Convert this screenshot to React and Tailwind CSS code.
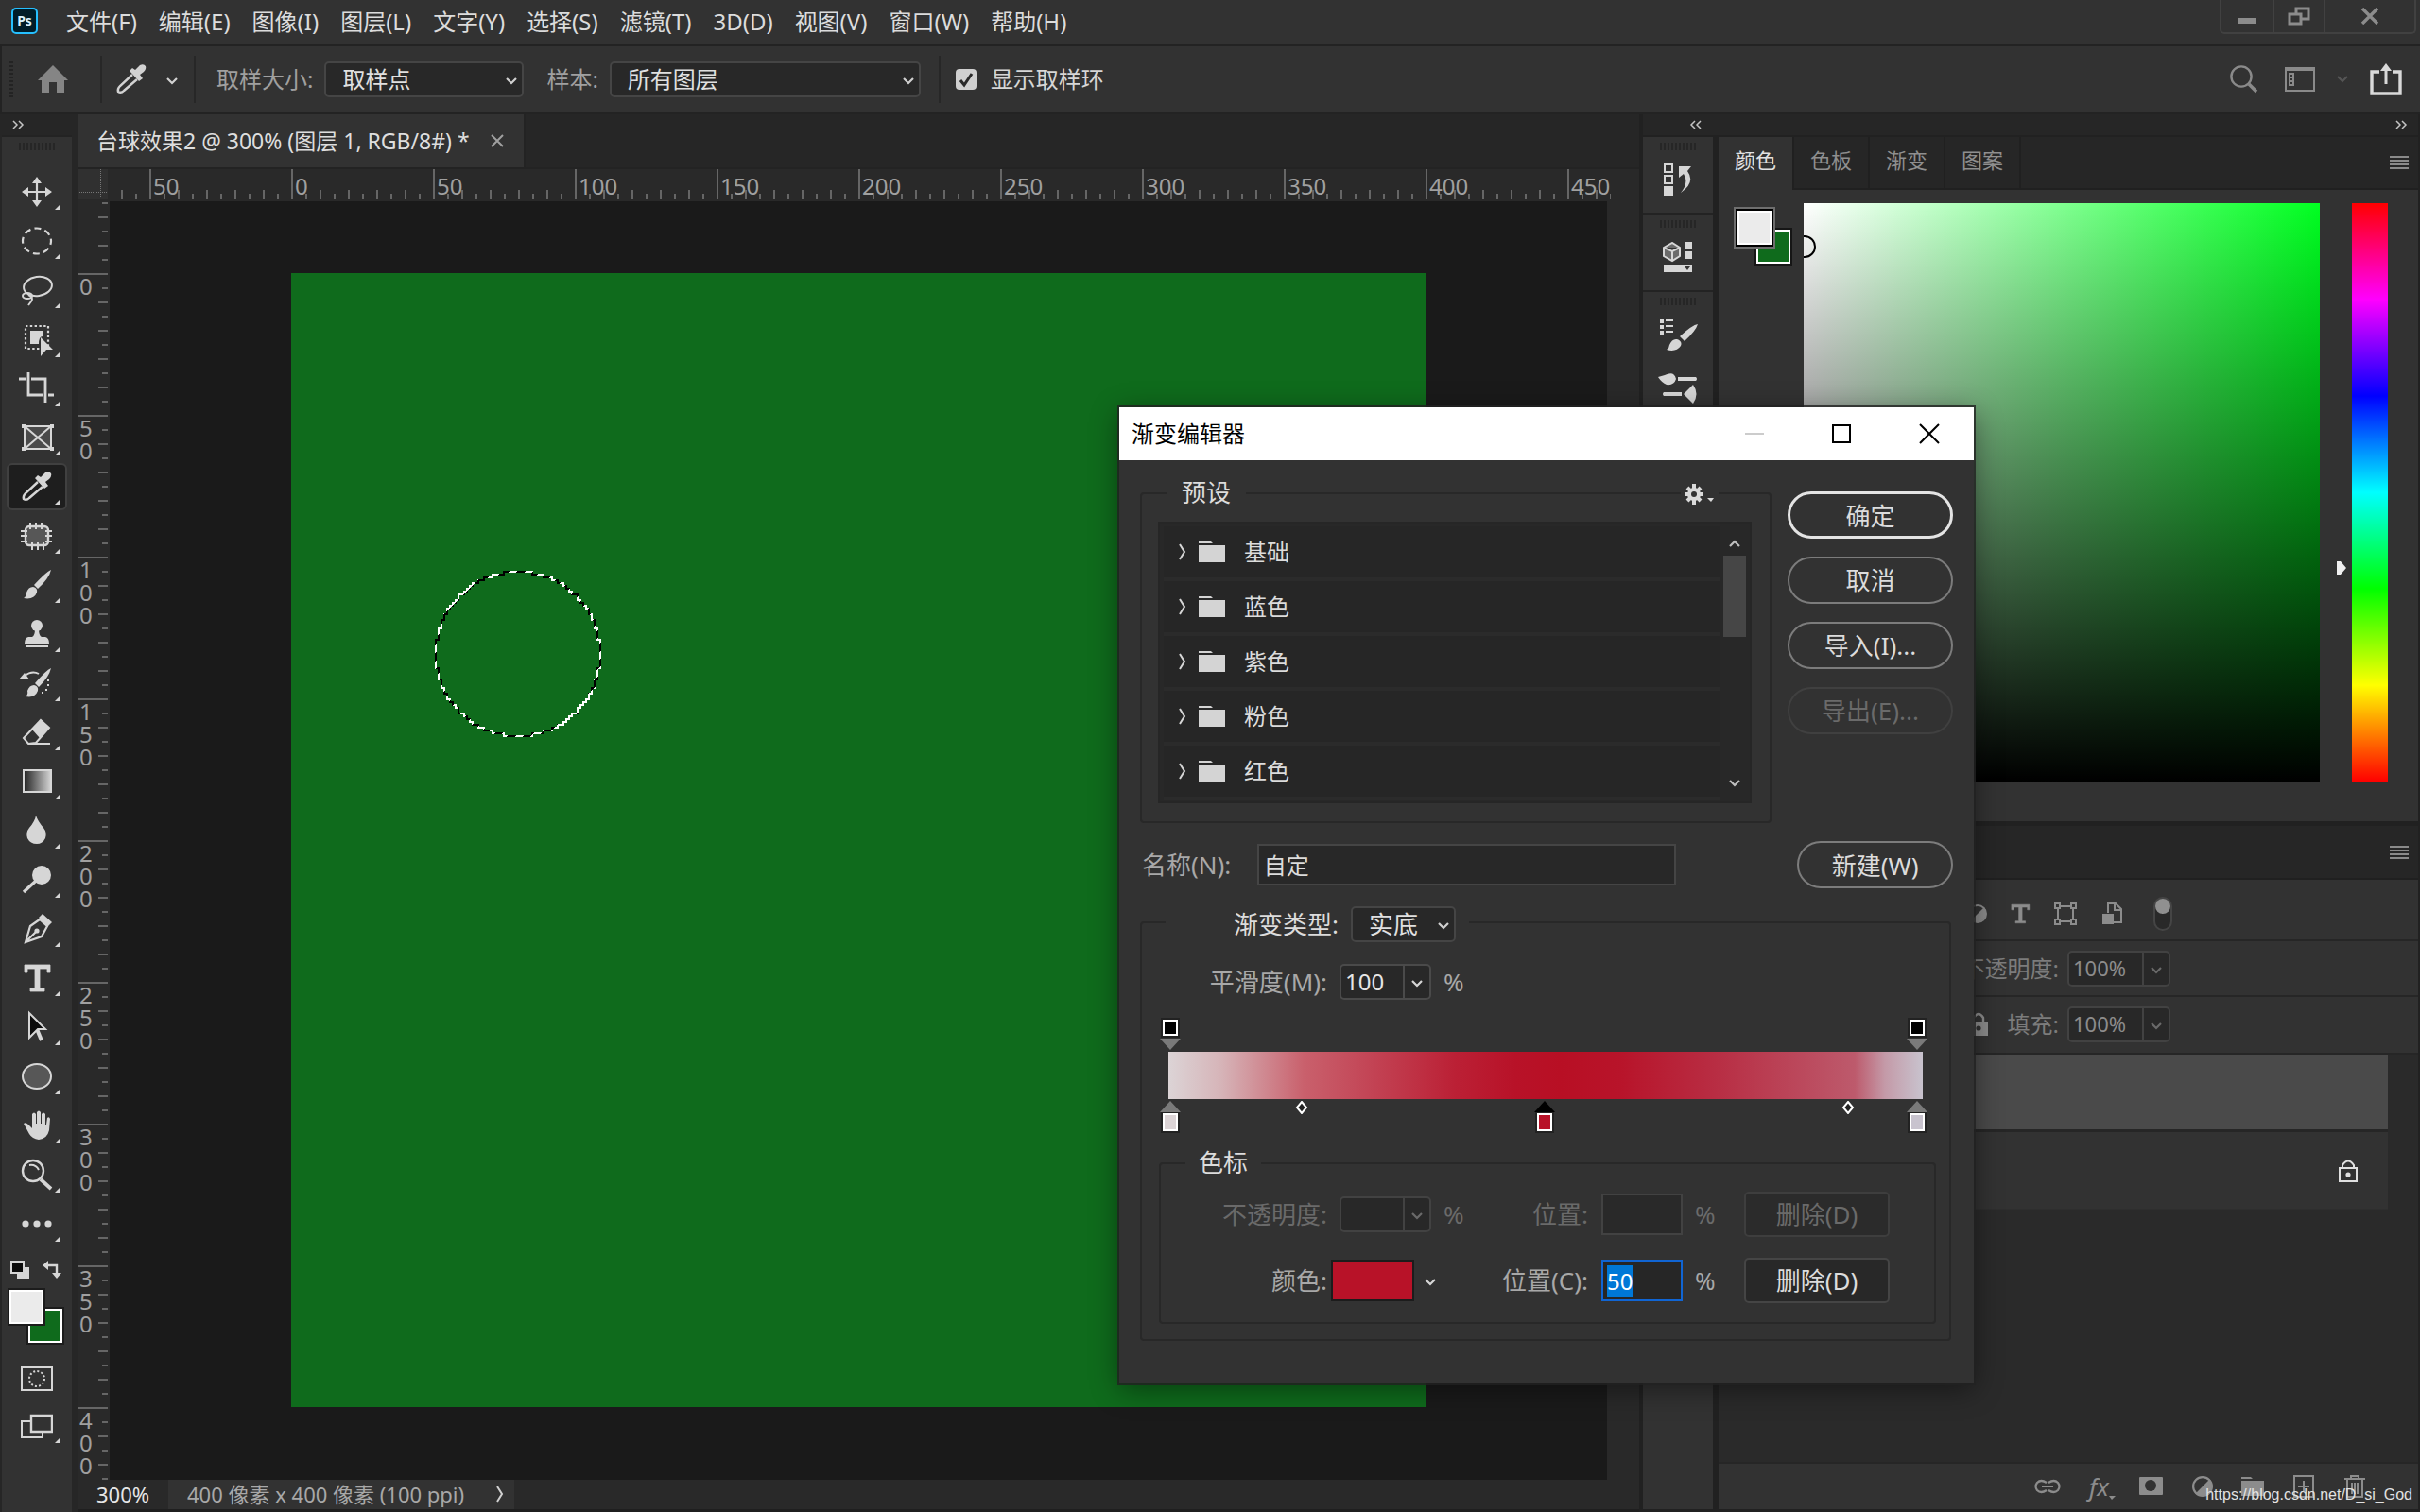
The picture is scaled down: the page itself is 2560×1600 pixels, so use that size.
// src/App.jsx
import React, { useEffect, useRef } from 'react';

const MENUS = ['文件(F)', '编辑(E)', '图像(I)', '图层(L)', '文字(Y)', '选择(S)', '滤镜(T)', '3D(D)', '视图(V)', '窗口(W)', '帮助(H)'];
const PRESETS = ['基础', '蓝色', '紫色', '粉色', '红色'];
const PANEL_TABS = ['颜色', '色板', '渐变', '图案'];
// the first cell of each ruler starts outside the view
const H_LABELS = ['', 50, 0, 50, 100, 150, 200, 250, 300, 350, 400, 450];
const V_LABELS = ['', 0, 50, 100, 150, 200, 250, 300, 350, 400];
const TICKS = [1, 2, 3, 4, 5, 6, 7, 8, 9];

const eyedropper = (
  <>
    <path d="M21 15 L8 27 Q5 30 6 33 Q9 35 12 32 L26 20" fill="none" stroke="currentColor" strokeWidth="2.4" />
    <path d="M18 11 L21 8 L24 10 L29 5 Q33 3 35 6 Q36 9 33 12 L29 15 L32 19 L28 22 Z" fill="currentColor" />
  </>
);

const brush = (
  <>
    <path d="M35 4 Q30 6 17 20 L21 24 Q33 13 35 4 Z" fill="currentColor" />
    <path d="M6 34 Q9 32 9 28 Q11 22 16 22 Q21 23 20 28 Q17 36 6 34 Z" fill="currentColor" />
  </>
);

const typeIcon = (
  <path d="M7 6 H34 V14 H31 V10 H23 V31 H28 V34 H13 V31 H18 V10 H10 V14 H7 Z" fill="currentColor" stroke="currentColor" strokeWidth="0.8" />
);

const TOOLS = [
  {
    name: '移动工具',
    icon: (
      <>
        <path d="M20 9 V31 M9 20 H31" stroke="currentColor" strokeWidth="2.2" />
        <path d="M20 4 L25 11 H15 Z M20 36 L25 29 H15 Z M4 20 L11 15 V25 Z M36 20 L29 15 V25 Z" fill="currentColor" />
      </>
    ),
  },
  {
    name: '椭圆选框工具',
    icon: <ellipse cx="20" cy="20" rx="15" ry="13.5" fill="none" stroke="currentColor" strokeWidth="2.2" strokeDasharray="7 4.2" strokeDashoffset="3" />,
  },
  {
    name: '套索工具',
    icon: (
      <g fill="none" stroke="currentColor" strokeWidth="2">
        <ellipse cx="21" cy="16" rx="15" ry="10" transform="rotate(-8 21 16)" />
        <ellipse cx="10" cy="26" rx="5" ry="3" />
        <path d="M11 25 Q17 28 14 32 L11 36" />
      </g>
    ),
  },
  {
    name: '对象选择工具',
    icon: (
      <>
        <rect x="8" y="6" width="24" height="24" fill="none" stroke="currentColor" strokeWidth="2.2" strokeDasharray="2.4 2.4" />
        <path d="M13 11 H27 V17 Q22 16 22 25 H13 Z" fill="currentColor" />
        <path d="M24 18 L37 31 H30 L24 38 Z" fill="currentColor" />
      </>
    ),
  },
  {
    name: '裁剪工具',
    icon: <path d="M1 10 H8 M11 3 V27 H26 M14 10 H29 V35 M32 27 H38" fill="none" stroke="currentColor" strokeWidth="2.8" />,
  },
  {
    name: '图框工具',
    icon: (
      <>
        <path d="M7 8 H35 V32 H7 Z M7 8 L35 32 M35 8 L7 32" fill="#4a4a4a" stroke="currentColor" strokeWidth="2" />
        <path d="M4 6 H8 V10 H4 Z M34 6 H38 V10 H34 Z M4 30 H8 V34 H4 Z M34 30 H38 V34 H34 Z" fill="currentColor" />
      </>
    ),
  },
  { name: '吸管工具', icon: eyedropper, active: true },
  {
    name: '修补工具',
    icon: (
      <>
        <rect x="8" y="10" width="24" height="20" rx="4" fill="#575757" stroke="currentColor" strokeWidth="2.4" />
        <path d="M13 6 V13 M19 6 V13 M25 6 V13 M15 27 V35 M21 27 V35 M27 27 V35 M3 15 H10 M3 20 H10 M3 26 H10 M29 15 H36 M29 20 H36 M29 26 H36" stroke="currentColor" strokeWidth="2" />
      </>
    ),
  },
  { name: '画笔工具', icon: brush },
  {
    name: '仿制图章工具',
    icon: (
      <>
        <circle cx="20" cy="11" r="6" fill="currentColor" />
        <path d="M18 14 H22 Q22 22 25 23 H29 Q33 24 33 30 H7 Q7 24 11 23 H15 Q18 22 18 14 Z M8 32 H32 V34 H8 Z" fill="currentColor" />
      </>
    ),
  },
  {
    name: '历史记录画笔工具',
    icon: (
      <>
        <path d="M35 4 Q30 6 18 20 L22 24 Q33 13 35 4 Z" fill="currentColor" />
        <path d="M8 34 Q11 32 10 28 Q12 22 17 22 Q22 23 21 28 Q18 36 8 34 Z" fill="currentColor" />
        <path d="M1 16 L7 9 L12 16 Z" fill="currentColor" />
        <path d="M7 12 Q15 6 22 10" fill="none" stroke="currentColor" strokeWidth="2" />
        <path d="M31 16 h2 v2 h-2 Z M31 21 h2 v2 h-2 Z M29 26 h2 v2 h-2 Z M25 29 h2 v2 h-2 Z" fill="currentColor" />
      </>
    ),
  },
  {
    name: '橡皮擦工具',
    icon: (
      <>
        <path d="M6 26 L24 7 L33 15 L19 31 L11 32 Z M11 32 H34" fill="none" stroke="currentColor" strokeWidth="2" />
        <path d="M15 17 L24 7 L33 15 L23 26 Z" fill="currentColor" />
      </>
    ),
  },
  {
    name: '渐变工具',
    icon: (
      <>
        <defs>
          <linearGradient id="tool-gradient">
            <stop offset="0" stopColor="#222" />
            <stop offset="1" stopColor="#d6d6d6" />
          </linearGradient>
        </defs>
        <rect x="6" y="8" width="29" height="23" fill="url(#tool-gradient)" stroke="currentColor" strokeWidth="2" />
      </>
    ),
  },
  { name: '模糊工具', icon: <path d="M19 4 Q21 10 27 17 Q31 22 29 28 Q26 34 20 34 Q13 34 10 28 Q8 22 12 17 Q18 10 19 4 Z" fill="currentColor" /> },
  {
    name: '减淡工具',
    icon: (
      <>
        <circle cx="25" cy="15" r="10" fill="currentColor" />
        <path d="M19 21 L6 33" stroke="currentColor" strokeWidth="3.4" />
      </>
    ),
  },
  {
    name: '钢笔工具',
    icon: (
      <>
        <path d="M8 34 L13 17 L23 10 L31 17 L25 28 Z M8 34 L19 23" fill="none" stroke="currentColor" strokeWidth="2.2" />
        <circle cx="20" cy="22" r="2.6" fill="currentColor" />
        <path d="M22 8 L26 4 L36 13 L31 18 Z" fill="currentColor" />
      </>
    ),
  },
  { name: '横排文字工具', icon: typeIcon },
  {
    name: '路径选择工具',
    icon: (
      <>
        <path d="M20 22 L25 34" stroke="currentColor" strokeWidth="4" />
        <path d="M12 5 L29 22 H21 L12 31 Z" fill="#0c0c0c" stroke="currentColor" strokeWidth="2" />
      </>
    ),
  },
  { name: '椭圆工具', icon: <ellipse cx="20" cy="20" rx="15" ry="13" fill="#575757" stroke="currentColor" strokeWidth="2" /> },
  {
    name: '抓手工具',
    icon: (
      <path d="M6 18 Q8 16 11 19 L15 23 V8 Q17 5 19 8 V18 H20 V6 Q22 3 24 6 V18 H25 V8 Q27 5 29 8 V19 H30 L31 12 Q33 10 34 13 L33 25 Q31 34 22 35 Q15 34 12 29 Z" fill="currentColor" />
    ),
  },
  {
    name: '缩放工具',
    icon: (
      <>
        <circle cx="16" cy="16" r="11" fill="none" stroke="currentColor" strokeWidth="2.4" />
        <path d="M12 10 Q19 9 22 15" fill="none" stroke="currentColor" strokeWidth="2" />
        <path d="M24 25 L35 35" stroke="currentColor" strokeWidth="3.8" />
      </>
    ),
  },
  {
    name: '编辑工具栏',
    icon: (
      <g fill="currentColor">
        <circle cx="8" cy="20" r="3.6" />
        <circle cx="20" cy="20" r="3.6" />
        <circle cx="32" cy="20" r="3.6" />
      </g>
    ),
  },
];

// outline of a 58px circle on the 3px document pixel grid
function marqueePath() {
  const n = 58;
  const half = [];
  for (let y = 0; y < n; y++) {
    const dy = y + 0.5 - n / 2;
    half.push(Math.round(Math.sqrt((n / 2) ** 2 - dy * dy)));
  }
  let d = '';
  half.forEach((w, y) => {
    d += `${y ? 'L' : 'M'}${(n / 2 + w) * 3 + 1} ${y * 3 + 3} V${y * 3 + 6} `;
  });
  for (let y = n - 1; y >= 0; y--) {
    d += `L${(n / 2 - half[y]) * 3 + 1} ${y * 3 + 6} V${y * 3 + 3} `;
  }
  return d + 'Z';
}

function Icon({ size = 40, box = '0 0 40 40', className = '', children }) {
  return (
    <svg width={size} height={size} viewBox={box} className={`shrink-0 ${className}`} aria-hidden="true">
      {children}
    </svg>
  );
}

function Chevron({ className = '' }) {
  return (
    <svg width="14" height="10" viewBox="0 0 14 10" className={`shrink-0 ${className}`} aria-hidden="true">
      <path d="M2 2 L7 7 L12 2" fill="none" stroke="currentColor" strokeWidth="2.2" />
    </svg>
  );
}

function DoubleChevron({ left }) {
  return (
    <svg width="14" height="10" viewBox="0 0 14 10" aria-hidden="true">
      <path d={left ? 'M6 1 L2 5 L6 9 M12 1 L8 5 L12 9' : 'M2 1 L6 5 L2 9 M8 1 L12 5 L8 9'} fill="none" stroke="#c4c4c4" strokeWidth="1.5" />
    </svg>
  );
}

function Grip() {
  return <div className="h-2 w-[38px] bg-[repeating-linear-gradient(to_right,#262626_0_2px,transparent_2px_4px)]" />;
}

function MenuLines() {
  return (
    <button aria-label="面板菜单" className="h-[14px] w-5 bg-[repeating-linear-gradient(to_bottom,#8a8a8a_0_2px,transparent_2px_4px)]" />
  );
}

function Dropdown({ id, value, className }) {
  return (
    <div className={`relative flex items-center ${className}`}>
      <select id={id} defaultValue={value} className="h-full w-full appearance-none rounded-[5px] border-2 border-[#454545] bg-[#282828] pl-[17px] text-[#e0e0e0]">
        <option>{value}</option>
      </select>
      <Chevron className="pointer-events-none absolute right-[6px] mt-1 text-[#d0d0d0]" />
    </div>
  );
}

function ComboInput({ id, value, disabled, muted, className }) {
  return (
    <div className={`flex h-[38px] overflow-hidden rounded-[5px] border-2 bg-[#282828] ${disabled || muted ? 'border-[#424242]' : 'border-[#4a4a4a]'} ${className}`}>
      <input id={id} defaultValue={value} disabled={disabled} className={`w-0 flex-1 bg-transparent pl-1 outline-none ${muted ? 'text-[#8c8c8c]' : 'text-[#e6e6e6]'}`} />
      <button
        aria-label="展开"
        disabled={disabled}
        className={`flex w-7 items-center justify-center border-l-2 pt-1 ${disabled || muted ? 'border-[#424242] text-[#6a6a6a]' : 'border-[#4a4a4a] text-[#d6d6d6]'}`}
      >
        <Chevron />
      </button>
    </div>
  );
}

function MenuBar() {
  return (
    <header className="flex h-[49px] shrink-0 items-start border-b-2 border-[#232323] pl-3 pr-1">
      <div className="mt-2 flex h-7 w-7 items-center justify-center rounded-[5px] border-2 border-[#26c0ff] bg-[#001d29] text-sm font-bold leading-4 text-[#d8f2ff]">Ps</div>
      <nav className="ml-[30px] flex h-[45px] flex-1 items-center gap-[23px] text-[#dcdcdc]">
        {MENUS.map(menu => (
          <button key={menu} className="leading-8">{menu}</button>
        ))}
      </nav>
      <div className="flex h-9 rounded-b-[5px] border-x-2 border-b-2 border-[#414141] text-[#8c8c8c]">
        <button aria-label="最小化" className="flex w-14 items-center justify-center border-r-2 border-[#414141]">
          <svg width="20" height="20"><path d="M0 12 H20 V18 H0 Z" fill="currentColor" /></svg>
        </button>
        <button aria-label="还原" className="flex w-[54px] items-center justify-center border-r-2 border-[#414141]">
          <svg width="24" height="22" fill="none" stroke="currentColor" strokeWidth="3"><path d="M9 8 V3 H22 V14 H15 M2 9 H14 V19 H2 Z" /></svg>
        </button>
        <button aria-label="关闭" className="flex w-[94px] items-center justify-center">
          <svg width="20" height="18"><path d="M2 1 L18 17 M18 1 L2 17" stroke="currentColor" strokeWidth="3.4" /></svg>
        </button>
      </div>
    </header>
  );
}

function OptionsBar() {
  return (
    <div className="flex h-[72px] shrink-0 items-center border-b-2 border-l-2 border-[#232323] pr-[19px]">
      <div className="ml-2 h-[38px] w-1 bg-[repeating-linear-gradient(to_bottom,#232323_0_2px,transparent_2px_4px)]" />
      <button aria-label="主页" className="ml-[26px] text-[#858585]">
        <svg width="32" height="30"><path d="M16 0 L32 16 H28 V29 H20 V18 H12 V29 H4 V16 H0 Z" fill="currentColor" /></svg>
      </button>
      <div className="ml-[34px] h-[50px] w-[2px] bg-[#272727]" />
      <button aria-label="吸管工具" className="ml-[11px] flex items-center text-[#d2d2d2]">
        <Icon>{eyedropper}</Icon>
        <Chevron className="ml-4 mt-1" />
      </button>
      <div className="ml-4 h-[50px] w-[2px] bg-[#272727]" />
      <label htmlFor="sample-size" className="ml-[22px] text-[#a0a0a0]">取样大小:</label>
      <Dropdown id="sample-size" value="取样点" className="ml-3 h-[38px] w-[211px]" />
      <label htmlFor="sample-layer" className="ml-6 text-[#a0a0a0]">样本:</label>
      <Dropdown id="sample-layer" value="所有图层" className="ml-3 h-[38px] w-[329px]" />
      <div className="ml-[19px] h-[50px] w-[2px] bg-[#272727]" />
      <label className="ml-4 flex items-center gap-[15px] text-[#d6d6d6]">
        <span className="relative flex">
          <input type="checkbox" defaultChecked className="h-[22px] w-[22px] appearance-none rounded bg-[#d0d0d0]" />
          <svg width="22" height="22" className="pointer-events-none absolute inset-0"><path d="M5 12 L9 17 L17 5" fill="none" stroke="#2a2a2a" strokeWidth="3" /></svg>
        </span>
        显示取样环
      </label>
      <div className="ml-auto flex items-center text-[#8a8a8a]">
        <button aria-label="搜索">
          <svg width="30" height="30"><circle cx="12" cy="12" r="10.6" fill="none" stroke="currentColor" strokeWidth="2.4" /><path d="M20 20 L28 28" stroke="currentColor" strokeWidth="3.6" /></svg>
        </button>
        <button aria-label="工作区" className="ml-[28px] flex items-center">
          <svg width="32" height="26"><path d="M1 1 H31 V25 H1 Z" fill="none" stroke="currentColor" strokeWidth="2" /><path d="M0 0 H32 V4 H0 Z" fill="currentColor" /><path d="M5 7 h4 v12 h-4 Z M5 11 h4 M5 15 h4" fill="none" stroke="currentColor" strokeWidth="2" /></svg>
          <Chevron className="ml-[22px] text-[#555]" />
        </button>
        <button aria-label="共享" className="ml-[22px] text-[#dadada]">
          <svg width="34" height="34"><path d="M10 9 H2 V32 H32 V9 H24" fill="none" stroke="currentColor" strokeWidth="3.4" /><path d="M17 22 V6" stroke="currentColor" strokeWidth="3" /><path d="M17 0 L23 8 H11 Z" fill="currentColor" /></svg>
        </button>
      </div>
    </div>
  );
}

function Swatches() {
  return (
    <div className="grid grid-cols-[20px_20px_20px] grid-rows-[20px_20px_20px] self-center">
      <button aria-label="背景色" className="col-span-2 col-start-2 row-span-2 row-start-2 border-2 border-[#1c1c1c] bg-white p-[2px]">
        <div className="h-full bg-[#0f6b1c]" />
      </button>
      <button aria-label="前景色" className="z-10 col-span-2 col-start-1 row-span-2 row-start-1 border-2 border-[#1c1c1c] bg-white p-[2px]">
        <div className="h-full bg-[#ebebeb]" />
      </button>
    </div>
  );
}

function Toolbar() {
  return (
    <aside className="flex w-[82px] shrink-0 flex-col border-l-2 border-r-[6px] border-[#262626]">
      <div className="flex h-6 items-center border-b-2 border-[#232323] bg-[#262626] pl-[10px]">
        <DoubleChevron />
      </div>
      <div className="flex flex-1 flex-col items-center pt-[6px]">
        <Grip />
        <div className="mt-[19px] flex flex-col gap-[2px] text-[#d6d6d6]">
          {TOOLS.map(tool => (
            <button
              key={tool.name}
              aria-label={tool.name}
              className={`relative flex h-[50px] w-16 items-center justify-center rounded-md border-2 ${tool.active ? 'border-[#404040] bg-[#1e1e1e]' : 'border-transparent'}`}
            >
              <Icon>{tool.icon}</Icon>
              <svg width="6" height="6" className="absolute bottom-1 right-[5px]"><path d="M6 0 V6 H0 Z" fill="currentColor" /></svg>
            </button>
          ))}
        </div>
        <div className="mr-[2px] mt-[14px] flex w-[54px] items-start justify-between text-[#d6d6d6]">
          <svg width="22" height="20"><path d="M7 7 H20 V19 H7 Z" fill="currentColor" /><path d="M1 1 H14 V13 H1 Z" fill="#0c0c0c" stroke="currentColor" strokeWidth="2" /></svg>
          <svg width="20" height="20"><path d="M5 5 H15 V14" fill="none" stroke="currentColor" strokeWidth="2.4" /><path d="M0 5 L6 0 V10 Z M15 19 L10 13 H20 Z" fill="currentColor" /></svg>
        </div>
        <div className="mr-[2px] mt-[9px] flex">
          <Swatches />
        </div>
        <button aria-label="快速蒙版" className="mt-[23px] text-[#d6d6d6]">
          <svg width="34" height="26" fill="none" stroke="currentColor" strokeWidth="2"><path d="M1 1 H33 V25 H1 Z" /><circle cx="17" cy="13" r="8" strokeDasharray="2 2.2" /></svg>
        </button>
        <button aria-label="屏幕模式" className="relative mt-6 text-[#d6d6d6]">
          <svg width="34" height="27" fill="none" stroke="currentColor" strokeWidth="2"><path d="M11 8 H1 V25 H23 V20" /><path d="M11 2 H33 V19 H11 Z" strokeWidth="2.4" /></svg>
          <svg width="6" height="6" className="absolute -bottom-1 -right-2"><path d="M6 0 V6 H0 Z" fill="currentColor" /></svg>
        </button>
      </div>
    </aside>
  );
}

function HorizontalRuler() {
  return (
    <div className="h-[34px] bg-[#292929] pr-[30px]">
      <div className="h-9 overflow-x-clip">
        <div className="-ml-[108px] flex">
          {H_LABELS.map((label, i) => (
            <div key={i} className="relative h-8 w-[150px] shrink-0 border-l-2 border-[#666] pl-[2px] pt-[6px] leading-6 text-[#a0a0a0]">
              {label}
              <svg width="150" height="32" className="absolute -left-[2px] top-0">
                {TICKS.map(t => (
                  <path key={t} d={`M${t * 15 + 1} ${t % 2 ? 26 : 22} V32`} stroke="#666" strokeWidth="2" />
                ))}
              </svg>
            </div>
          ))}
        </div>
      </div>
    </div>
  );
}

function VerticalRuler() {
  return (
    <div className="w-[34px] shrink-0 overflow-hidden bg-[#292929]">
      <div className="-mt-[74px]">
        {V_LABELS.map((label, i) => (
          <div key={i} className="relative h-[150px] w-8 border-t-2 border-[#666] pl-[2px] leading-6 text-[#a0a0a0]">
            {String(label).split('').map((digit, j) => (
              <div key={j}>{digit}</div>
            ))}
            <svg width="32" height="150" className="absolute -top-[2px] left-0">
              {TICKS.map(t => (
                <path key={t} d={`M${t % 2 ? 26 : 22} ${t * 15 + 1} H32`} stroke="#666" strokeWidth="2" />
              ))}
            </svg>
          </div>
        ))}
      </div>
    </div>
  );
}

function DocumentArea() {
  return (
    <main className="flex min-w-0 flex-1 flex-col">
      <div className="flex h-[58px] shrink-0 border-b-2 border-[#232323] bg-[#262626]">
        <div className="flex items-center gap-[22px] border-r-2 border-[#232323] bg-[#323232] pl-5 pr-[21px] text-[#dedede]">
          <span className="text-[23px]">台球效果2 @ 300% (图层 1, RGB/8#) *</span>
          <button aria-label="关闭文档">
            <svg width="14" height="14"><path d="M1 1 L13 13 M13 1 L1 13" stroke="#a0a0a0" strokeWidth="2" /></svg>
          </button>
        </div>
      </div>
      <div className="flex h-[34px] shrink-0">
        <div className="w-[34px] border-b-2 border-r-2 border-[#292929] bg-[#303030]">
          <svg width="32" height="32" stroke="#777" strokeDasharray="1 1"><path d="M24.5 0 V32 M0 24.5 H32" /></svg>
        </div>
        <div className="min-w-0 flex-1">
          <HorizontalRuler />
        </div>
      </div>
      <div className="flex min-h-0 flex-1">
        <VerticalRuler />
        <div className="z-10 min-w-0 flex-1 overflow-hidden bg-[#1a1a1a] pl-[192px] pt-[76px]">
          <div className="relative h-[1200px] w-[1200px] bg-[#0f6b1c]">
            <svg width="180" height="180" className="absolute left-[152px] top-[313px]" shapeRendering="crispEdges">
              <defs>
                <linearGradient id="ants" gradientUnits="userSpaceOnUse" x1="4" y1="4" x2="12.2" y2="12.2" spreadMethod="repeat">
                  <stop offset="0.5" stopColor="#000" />
                  <stop offset="0.5" stopColor="#fff" />
                </linearGradient>
              </defs>
              <path d={marqueePath()} fill="none" stroke="url(#ants)" strokeWidth="2" />
            </svg>
          </div>
        </div>
        <div className="w-[34px] shrink-0 bg-[#292929]" />
      </div>
      <footer className="flex h-[34px] shrink-0 items-stretch border-b-[3px] border-[#1f1f1f] bg-[#292929] text-[22px] leading-[30px]">
        <span className="w-24 pl-[20px] text-[#e6e6e6]">300%</span>
        <button className="flex items-center gap-[34px] bg-[#323232] pb-[2px] pl-5 pr-[11px] text-[#a8a8a8]">
          400 像素 x 400 像素 (100 ppi)
          <svg width="8" height="18"><path d="M1 1 L6 9 L1 17" fill="none" stroke="#d0d0d0" strokeWidth="2" /></svg>
        </button>
      </footer>
    </main>
  );
}

function Dock() {
  return (
    <div className="flex w-[74px] shrink-0 flex-col gap-[2px] bg-[#232323] text-[#d6d6d6]">
      <div className="flex h-20 flex-col items-center gap-[14px] bg-[#323232] pt-[6px]">
        <Grip />
        <button aria-label="历史记录">
          <svg width="30" height="34"><path d="M1 1 H9 V9 H1 Z M1 13 H9 V21 H1 Z" fill="none" stroke="currentColor" strokeWidth="2" /><path d="M0 24 H10 V34 H0 Z" fill="currentColor" /><path d="M16 3 H29 L25 8 Q34 20 18 31 Q27 20 21 11 L16 15 Z" fill="currentColor" /></svg>
        </button>
      </div>
      <div className="flex h-20 flex-col items-center gap-[15px] bg-[#323232] pt-[6px]">
        <Grip />
        <button aria-label="属性">
          <svg width="32" height="34"><path d="M1 6 L10 1 L18 6 V15 L10 20 L1 15 Z M1 6 L10 10 L18 6 M10 10 V20" fill="#6a6a6a" stroke="currentColor" strokeWidth="2" /><path d="M23 0 H31 V8 H23 Z M23 10 H31 V18 H23 Z M1 24 H31 V32 H1 Z" fill="currentColor" /><path d="M23 26 H29 L26 30 Z" fill="#333" /></svg>
        </button>
      </div>
      <div className="flex flex-1 flex-col items-center bg-[#323232] pt-[6px]">
        <Grip />
        <button aria-label="画笔设置" className="mt-[14px]">
          <svg width="42" height="36"><path d="M2 1 h4 v4 h-4 Z M2 7 h4 v4 h-4 Z M2 13 h4 v4 h-4 Z M8 1 h8 v2 h-8 Z M8 7 h8 v2 h-8 Z M8 13 h8 v2 h-8 Z" fill="currentColor" /><path d="M42 6 Q36 7 23 19 L28 24 Q40 13 42 6 Z M9 33 Q12 31 12 28 Q15 21 20 22 Q26 24 24 29 Q19 36 9 33 Z" fill="currentColor" /></svg>
        </button>
        <button aria-label="画笔" className="mt-[22px]">
          <svg width="42" height="34"><path d="M0 4 L7 2 Q17 -3 19 6 Q17 13 9 12 Q4 10 0 4 Z M21 4 H40 Q42 6 40 8 H21 Z M6 20 H25 V24 H6 Q4 22 6 20 Z M27 22 L37 12 Q44 22 37 32 Z" fill="currentColor" /></svg>
        </button>
      </div>
    </div>
  );
}

function ColorPanel() {
  return (
    <section className="bg-[#323232] pb-[42px]">
      <div className="flex h-14 items-stretch bg-[#262626] text-[22px]">
        {PANEL_TABS.map((tab, i) => (
          <button key={tab} className={i === 0 ? 'bg-[#323232] px-[17px] pb-[6px] text-[#e2e2e2]' : 'border-b-2 border-l-2 border-[#202020] px-[17px] pb-1 text-[#8f8f8f]'}>
            {tab}
          </button>
        ))}
        <div className="flex flex-1 items-center justify-end border-b-2 border-l-2 border-[#202020] pr-[10px]">
          <MenuLines />
        </div>
      </div>
      <div className="mt-[14px] flex">
        <div className="ml-4 mt-1 grid h-[62px] grid-cols-[22px_22px_18px] grid-rows-[22px_22px_18px]">
          <button aria-label="背景色" className="col-span-2 col-start-2 row-span-2 row-start-2 border-2 border-[#161616] bg-white p-[2px]">
            <div className="h-full bg-[#0f6b1c]" />
          </button>
          <button aria-label="前景色" className="z-10 col-span-2 col-start-1 row-span-2 row-start-1 border-2 border-[#6e6e6e] bg-black p-[2px]">
            <div className="h-full border-2 border-white bg-[#ebebeb]" />
          </button>
        </div>
        <div className="relative ml-3 h-[612px] flex-1 overflow-hidden bg-[linear-gradient(to_top,#000,transparent),linear-gradient(to_right,#fff,#00ff21)]">
          <div className="absolute -left-[11px] top-[34px] h-6 w-6 rounded-full border-2 border-black" />
        </div>
        <div className="w-[34px] pt-[378px]">
          <svg width="12" height="16" className="ml-[17px]"><path d="M1 1 H5 L11 8 L5 15 H1 Z" fill="#f0f0f0" /></svg>
        </div>
        <div className="mr-8 w-[38px] bg-[linear-gradient(to_bottom,#f00,#f0f,#00f,#0ff,#0f0,#ff0,#f00)]" />
      </div>
    </section>
  );
}

function LayersPanel() {
  return (
    <section className="mt-[5px] flex min-h-0 flex-1 flex-col bg-[#2a2a2a]">
      <div className="flex h-[57px] items-center justify-end border-b-2 border-[#202020] bg-[#262626] pr-[10px]">
        <MenuLines />
      </div>
      <div className="flex h-[65px] items-center border-b-2 border-[#262626] bg-[#323232] pl-[264px] pt-2 text-[#8c8c8c]">
        <Icon size={20} box="0 0 20 20"><circle cx="10" cy="10" r="9" fill="none" stroke="currentColor" strokeWidth="2" /><path d="M3 17 A10 10 0 0 0 17 3 Z" fill="currentColor" /></Icon>
        <Icon size={28} className="ml-[21px]">{typeIcon}</Icon>
        <svg width="24" height="24" className="ml-[22px]" fill="none" stroke="currentColor" strokeWidth="2"><path d="M4 4 H20 V20 H4 Z" /><path d="M1 1 h5 v5 h-5 Z M18 1 h5 v5 h-5 Z M1 18 h5 v5 h-5 Z M18 18 h5 v5 h-5 Z" fill="#323232" /></svg>
        <svg width="22" height="24" className="ml-[27px]"><path d="M6 11 V1 H14 L20 7 V21 H12 M13 1 V8 H20" fill="none" stroke="currentColor" strokeWidth="2" /><path d="M0 12 H12 V23 H0 Z" fill="currentColor" /></svg>
        <div className="ml-8 h-9 w-5 rounded-full border-2 border-[#454545] bg-[#292929]">
          <div className="h-4 w-4 rounded-full bg-[#909090]" />
        </div>
      </div>
      <div className="flex h-[59px] items-center border-b-2 border-[#262626] bg-[#323232] text-[22px]">
        <label htmlFor="layer-opacity" className="w-[360px] text-right text-2xl text-[#7c7c7c]">不透明度:</label>
        <ComboInput id="layer-opacity" value="100%" muted className="ml-[9px] w-[109px]" />
      </div>
      <div className="flex h-[61px] items-center border-b-2 border-[#262626] bg-[#323232] pb-[2px] text-[22px] text-[#8c8c8c]">
        <svg width="20" height="26" className="ml-[265px]"><path d="M0 11 H20 V25 H0 Z" fill="currentColor" /><path d="M5 12 V6 Q10 -2 15 6 V12" fill="none" stroke="currentColor" strokeWidth="2.4" /><circle cx="10" cy="17" r="2.6" fill="#323232" /></svg>
        <label htmlFor="layer-fill" className="w-[75px] text-right text-2xl text-[#7c7c7c]">填充:</label>
        <ComboInput id="layer-fill" value="100%" muted className="ml-[9px] w-[109px]" />
      </div>
      <div className="min-h-0 flex-1 pr-8">
        <div className="h-[82px] border-b-[3px] border-[#262626] bg-[#4a4a4a]" />
        <div className="flex h-[82px] items-center justify-end border-b border-[#2e2e2e] bg-[#323232] pr-8">
          <svg width="20" height="24" fill="none" stroke="#e0e0e0" strokeWidth="2"><path d="M1 9 H19 V23 H1 Z M4 9 V6 Q10 -3 16 6 V9" /><circle cx="10" cy="16" r="1.6" fill="#e0e0e0" /></svg>
        </div>
      </div>
      <div className="flex h-[50px] items-center border-t-2 border-[#262626] bg-[#323232] pl-[334px] text-[#8c8c8c]">
        <svg width="28" height="16" fill="none" stroke="currentColor" strokeWidth="2.2"><path d="M13 4 Q7 0 3 4 Q0 8 3 12 Q7 16 13 12 M15 4 Q21 0 25 4 Q28 8 25 12 Q21 16 15 12 M8 8 H20" /></svg>
        <button className="ml-[30px] flex w-7 items-end text-[26px] italic leading-7">
          fx
          <svg width="7" height="4" className="shrink-0"><path d="M0 0 H7 L3 4 Z" fill="currentColor" /></svg>
        </button>
        <svg width="26" height="20" className="ml-[25px]"><rect width="25" height="19" rx="1" fill="currentColor" /><ellipse cx="12" cy="9" rx="6" ry="6" fill="#323232" /></svg>
        <Icon size={22} box="0 0 20 20" className="ml-[30px]"><circle cx="10" cy="10" r="9" fill="none" stroke="currentColor" strokeWidth="2" /><path d="M3 17 A10 10 0 0 0 17 3 Z" fill="currentColor" /></Icon>
        <svg width="24" height="20" className="ml-[30px]"><path d="M0 0 H10 L12 2 H0 Z M0 4 H24 V20 H0 Z" fill="currentColor" /></svg>
        <svg width="22" height="24" className="ml-[31px]" fill="none" stroke="currentColor" strokeWidth="2"><path d="M1 1 H21 V23 H1 Z M11 6 V18 M5 12 H17" /></svg>
        <svg width="22" height="24" className="ml-[32px]" fill="none" stroke="currentColor" strokeWidth="2"><path d="M0 4 H22 M3 4 V23 H19 V4 M7 3 V1 H15 V3 M8 8 V20 M11 8 V20 M14 8 V20" /></svg>
      </div>
    </section>
  );
}

function StopTop() {
  return (
    <svg width="22" height="34"><path d="M1 0 H21 V21 H1 Z" fill="#222" /><path d="M3 2 H19 V19 H3 Z" fill="#fff" /><path d="M5 4 H17 V17 H5 Z" fill="#000" /><path d="M0 22 H22 L11 34 Z" fill="#7a7a7a" /></svg>
  );
}

function StopBottom({ color, active }) {
  return (
    <svg width="22" height="34"><path d="M0 12 H22 L11 0 Z" fill={active ? '#000' : '#7a7a7a'} /><path d="M1 12 H21 V34 H1 Z" fill="#222" /><path d="M3 13 H19 V32 H3 Z" fill="#fff" /><path d="M5 15 H17 V30 H5 Z" fill={color} /></svg>
  );
}

function Midpoint() {
  return <svg width="14" height="14"><path d="M7 1 L12 7 L7 13 L2 7 Z" fill="#222" stroke="#fff" strokeWidth="2" /></svg>;
}

function GradientEditor() {
  const locationRef = useRef(null);

  useEffect(() => {
    locationRef.current.focus({ preventScroll: true });
    locationRef.current.select();
  }, []);

  return (
    <div role="dialog" aria-label="渐变编辑器" className="absolute left-[1184px] top-[431px] z-20 w-[904px] bg-[#323232] text-[26px] leading-7 text-[#dcdcdc] shadow-[0_0_0_2px_rgba(34,34,34,0.8),0_6px_28px_rgba(0,0,0,0.45)]">
      <div className="flex h-14 items-center bg-white pl-[13px] pr-9 text-2xl text-black">
        <h2 className="flex-1">渐变编辑器</h2>
        <button aria-label="最小化"><svg width="22" height="22"><path d="M1 11 H21" stroke="#ccc" strokeWidth="2" /></svg></button>
        <button aria-label="最大化" className="ml-[70px]"><svg width="22" height="22"><path d="M2 2 H20 V20 H2 Z" fill="none" stroke="#000" strokeWidth="2" /></svg></button>
        <button aria-label="关闭" className="ml-[71px]"><svg width="22" height="22"><path d="M1 1 L21 21 M21 1 L1 21" stroke="#000" strokeWidth="2" /></svg></button>
      </div>

      <div className="px-[22px] pb-[45px] pt-[21px]">
        <div className="flex items-start">
          <fieldset className="relative h-[363px] w-[668px] rounded-sm border-2 border-[#282828]">
            <legend className="ml-[26px] h-7 px-4 leading-[26px]">预设</legend>
            <button aria-label="预设菜单" className="absolute -top-6 right-[54px] flex items-end bg-[#323232] px-1">
              <svg width="20" height="22" viewBox="0 0 20 22">
                <g stroke="#dadada" strokeWidth="4"><path d="M10 0 V22 M0 11 H20 M3 4 L17 18 M17 4 L3 18" /></g>
                <circle cx="10" cy="11" r="7" fill="#dadada" />
                <circle cx="10" cy="11" r="3" fill="#323232" />
              </svg>
              <svg width="8" height="8" className="ml-1"><path d="M0 1 H7 L4 5 Z" fill="#dadada" /></svg>
            </button>
            <div className="ml-[17px] mt-4 flex h-[298px] w-[628px] border-2 border-[#262626] bg-[#282828] text-2xl">
              <ul className="ml-1 mt-[3px] w-[588px]">
                {PRESETS.map(name => (
                  <li key={name} className="flex h-[58px] items-center border-b-4 border-[#2b2b2b] bg-[#262626] pl-4">
                    <svg width="10" height="20"><path d="M1 2 L6 10 L1 18" fill="none" stroke="#d6d6d6" strokeWidth="2" /></svg>
                    <svg width="28" height="22" className="ml-[11px]"><path d="M0 0 H13 L15 2 H0 Z M0 4 H28 V22 H0 Z" fill="#d4d4d4" /></svg>
                    <button className="ml-5">{name}</button>
                  </li>
                ))}
              </ul>
              <div className="ml-1 flex w-6 flex-col items-center text-[#c0c0c0]">
                <Chevron className="mt-[16px] rotate-180" />
                <div className="mt-[8px] h-[86px] w-6 bg-[#464646]" />
                <Chevron className="mb-[14px] mt-auto" />
              </div>
            </div>
          </fieldset>
          <div className="ml-[17px] mt-3 flex w-[175px] flex-col gap-[19px]">
            <button className="h-[50px] rounded-full border-[3px] border-[#e4e4e4] pt-[2px]">确定</button>
            <button className="h-[50px] rounded-full border-2 border-[#7c7c7c]">取消</button>
            <button className="h-[50px] rounded-full border-2 border-[#7c7c7c]">导入(I)...</button>
            <button disabled className="h-[50px] rounded-full border-2 border-[#404040] text-[#6a6a6a]">导出(E)...</button>
          </div>
        </div>

        <div className="mt-[19px] flex items-center">
          <label htmlFor="gradient-name" className="w-[124px] pl-[2px] text-[#a8a8a8]">名称(N):</label>
          <input id="gradient-name" defaultValue="自定" className="h-11 w-[445px] border-2 border-[#454545] bg-[#282828] pb-[2px] pl-[5px] text-2xl outline-none" />
          <button className="ml-32 h-[50px] w-[165px] rounded-full border-2 border-[#7c7c7c] pt-[2px]">新建(W)</button>
        </div>

        <fieldset className="mt-[15px] w-[858px] rounded-sm border-2 border-[#282828] pb-4">
          <legend className="ml-[25px] flex h-[42px] items-end pl-[72px] pr-[14px]">
            <label htmlFor="gradient-type" className="pb-[5px]">渐变类型:</label>
            <Dropdown id="gradient-type" value="实底" className="ml-[13px] h-[38px] w-[111px]" />
          </legend>
          <div className="mt-[23px] flex items-center">
            <label htmlFor="smoothness" className="w-[196px] text-right text-[#a8a8a8]">平滑度(M):</label>
            <ComboInput id="smoothness" value="100" className="ml-[13px] w-[97px] text-2xl" />
            <span className="ml-[13px] text-[#a8a8a8]">%</span>
          </div>

          <div className="ml-[19px] mt-[19px] w-[812px]">
            <div className="flex justify-between">
              <StopTop />
              <StopTop />
            </div>
            <div className="ml-[9px] mt-[2px] h-[50px] w-[798px] bg-[linear-gradient(to_right,#dcd4d6,#d6b4b8_7%,#c9606c_18%,#c44a5a_25%,#bb2035_38%,#b81228_46%,#b80f24_52%,#b8142a_60%,#b82c42_72%,#bd5a6c_91%,#c49aa8_95%,#c8c3ce)]" />
            <div className="mt-[2px] flex items-start">
              <StopBottom color="#dcd4d6" />
              <div className="flex w-[374px] justify-start pl-[121px]"><Midpoint /></div>
              <StopBottom color="#b81228" active />
              <div className="flex flex-1 justify-end pr-[55px]"><Midpoint /></div>
              <StopBottom color="#c8c3ce" />
            </div>
          </div>

          <fieldset className="ml-[18px] mt-[18px] w-[822px] rounded-sm border-2 border-[#282828] pb-5">
            <legend className="ml-[26px] h-7 px-[14px] leading-[26px]">色标</legend>
            <div className="mt-4 flex h-12 items-center text-[#6a6a6a]">
              <label htmlFor="stop-opacity" className="w-[176px] text-right">不透明度:</label>
              <div className="w-[123px] pl-[13px]">
                <ComboInput id="stop-opacity" value="" disabled className="w-[97px]" />
              </div>
              <span>%</span>
              <label htmlFor="opacity-location" className="flex-1 text-right">位置:</label>
              <input id="opacity-location" disabled className="ml-[14px] h-11 w-[86px] border-2 border-[#424242] bg-[#292929]" />
              <span className="ml-[13px] w-[52px]">%</span>
              <button disabled className="mr-[47px] h-12 w-[154px] rounded-[5px] border-2 border-[#3e3e3e] bg-[#2b2b2b]">删除(D)</button>
            </div>
            <div className="mt-[22px] flex h-12 items-center text-[#a8a8a8]">
              <span className="w-[176px] text-right">颜色:</span>
              <button aria-label="色标颜色" className="ml-[4px] h-11 w-[88px] border-2 border-[#1c1c1c] bg-[#b81228]" />
              <Chevron className="ml-[10px] mt-1 text-[#d6d6d6]" />
              <label htmlFor="color-location" className="flex-1 text-right">位置(C):</label>
              <input
                id="color-location"
                ref={locationRef}
                defaultValue="50"
                className="ml-[14px] h-11 w-[86px] border-2 border-[#1065d4] bg-[#262626] pl-1 text-2xl text-white outline-none selection:bg-[#0078d7] selection:text-white"
              />
              <span className="ml-[13px] w-[52px]">%</span>
              <button className="mr-[47px] h-12 w-[154px] rounded-[5px] border-2 border-[#454545] bg-[#282828] text-[#dcdcdc]">删除(D)</button>
            </div>
          </fieldset>
        </fieldset>
      </div>
    </div>
  );
}

export default function App() {
  return (
    <div className="relative flex h-screen w-full flex-col overflow-hidden bg-[#323232] font-['Noto_Sans','Noto_Sans_CJK_SC',sans-serif] text-2xl">
      <MenuBar />
      <OptionsBar />
      <div className="flex min-h-0 flex-1">
        <Toolbar />
        <DocumentArea />
        <div className="flex w-[826px] shrink-0 flex-col border-b-[3px] border-l-4 border-r-2 border-[#212121]">
          <div className="flex h-6 items-center justify-between border-b-2 border-[#212121] bg-[#262626] pl-[49px] pr-[11px]">
            <DoubleChevron left />
            <DoubleChevron />
          </div>
          <div className="flex min-h-0 flex-1 bg-[#212121]">
            <Dock />
            <div className="ml-[6px] flex min-w-0 flex-1 flex-col">
              <ColorPanel />
              <LayersPanel />
            </div>
          </div>
        </div>
      </div>
      <GradientEditor />
      <a href="https://blog.csdn.net/D_si_God" className="absolute bottom-2 right-2 z-30 font-['Liberation_Sans',sans-serif] text-base leading-5 text-[#e2e2e2]">
        https://blog.csdn.net/D_si_God
      </a>
    </div>
  );
}
